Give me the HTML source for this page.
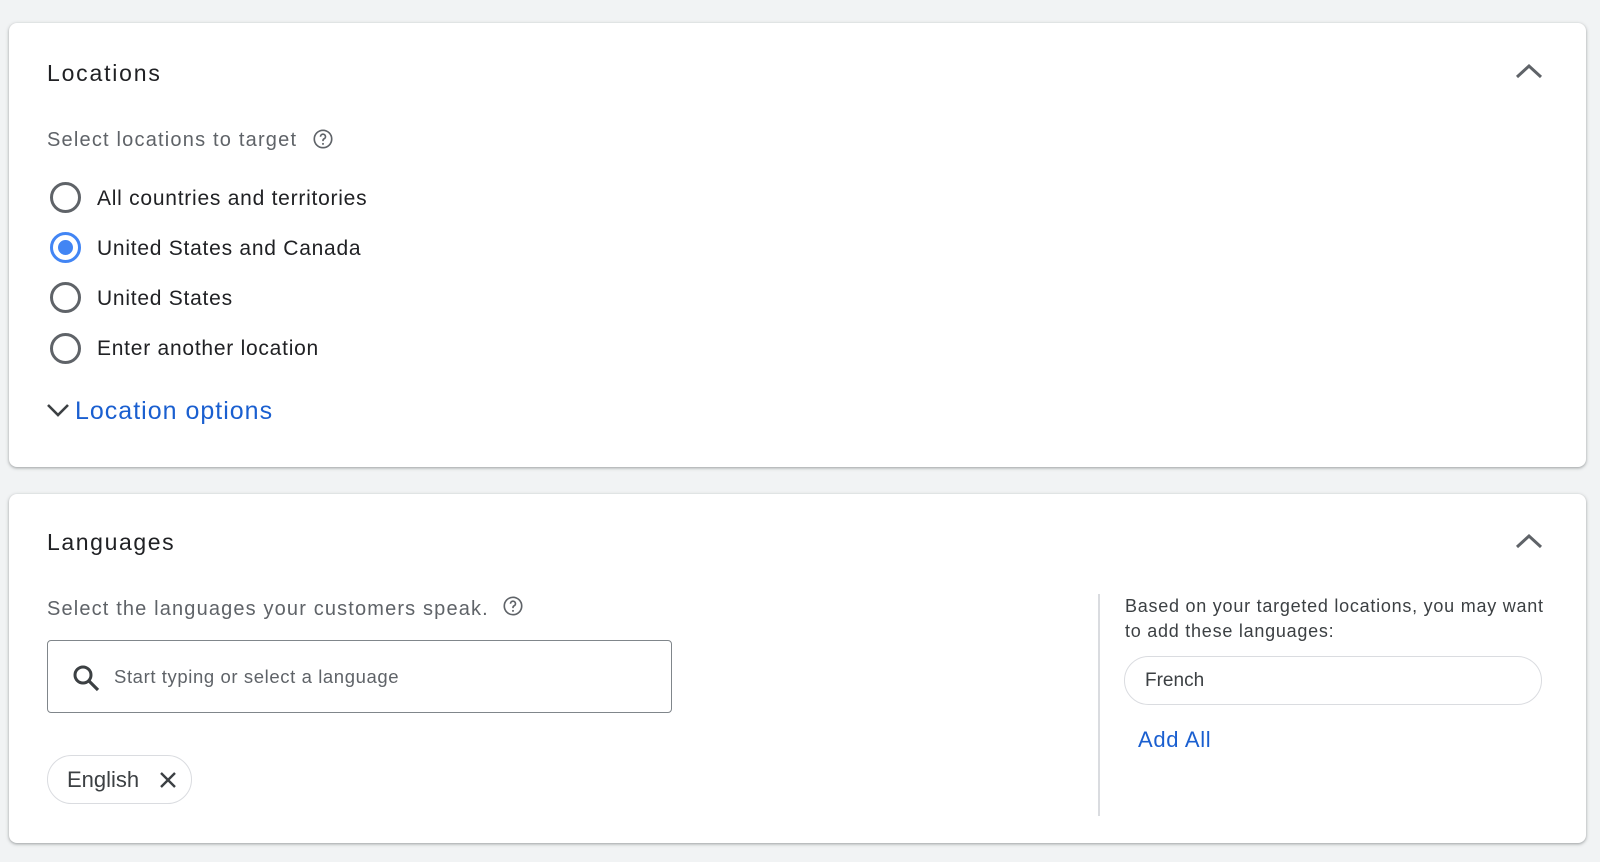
<!DOCTYPE html>
<html><head><meta charset="utf-8"><style>
*{margin:0;padding:0;box-sizing:border-box}
body{width:1600px;height:862px;background:#f1f3f4;font-family:"Liberation Sans",Arial,sans-serif;position:relative;overflow:hidden;color:#202124}
.card{position:absolute;left:9px;width:1577px;background:#fff;border-radius:8px;box-shadow:0 1px 2px rgba(60,64,67,.3),0 1px 3px 1px rgba(60,64,67,.15)}
.a{position:absolute;white-space:nowrap}
.t{font-size:23px;color:#202124}
.sub{font-size:20px;color:#5f6368;letter-spacing:1.2px}
.radio{position:absolute;width:31px;height:31px;border:3px solid #5f6368;border-radius:50%;left:50px}
.rl{font-size:21px;color:#202124;left:97px;letter-spacing:.75px}
</style></head><body>
<div class="card" style="top:23px;height:444px"></div>
<div class="card" style="top:494px;height:349px"></div>

<div class="a t" style="left:47px;top:60px;letter-spacing:1.8px">Locations</div>
<svg class="a" style="left:1515px;top:62px" width="28" height="18" viewBox="0 0 28 18"><path d="M2 15 L14 4 L26 15" fill="none" stroke="#5f6368" stroke-width="3"/></svg>
<div class="a sub" style="left:47px;top:129px">Select locations to target</div>
<svg class="a" style="left:312px;top:128px" width="22" height="22" viewBox="0 0 24 24"><circle cx="12" cy="12" r="9.5" fill="none" stroke="#5f6368" stroke-width="1.8"/><path d="M9.3 9.5a2.7 2.7 0 1 1 3.8 2.4c-.8.4-1.1 1-1.1 1.8v.6" fill="none" stroke="#5f6368" stroke-width="1.8"/><circle cx="12" cy="17.3" r="1.1" fill="#5f6368"/></svg>

<div class="radio" style="top:182px"></div>
<div class="a rl" style="top:187px">All countries and territories</div>
<div class="radio" style="top:232px;border-color:#4285f4"><div style="position:absolute;left:5px;top:5px;width:15px;height:15px;border-radius:50%;background:#4285f4"></div></div>
<div class="a rl" style="top:237px">United States and Canada</div>
<div class="radio" style="top:282px"></div>
<div class="a rl" style="top:287px">United States</div>
<div class="radio" style="top:333px"></div>
<div class="a rl" style="top:337px">Enter another location</div>

<svg class="a" style="left:46px;top:402px" width="24" height="16" viewBox="0 0 24 16"><path d="M2 3 L12 13 L22 3" fill="none" stroke="#3c4043" stroke-width="2.6"/></svg>
<div class="a" style="left:75px;top:397px;font-size:25px;color:#1a5fd0;letter-spacing:1px">Location options</div>

<div class="a t" style="left:47px;top:529px;letter-spacing:1.6px">Languages</div>
<svg class="a" style="left:1515px;top:532px" width="28" height="18" viewBox="0 0 28 18"><path d="M2 15 L14 4 L26 15" fill="none" stroke="#5f6368" stroke-width="3"/></svg>
<div class="a sub" style="left:47px;top:598px;letter-spacing:1.15px">Select the languages your customers speak.</div>
<svg class="a" style="left:502px;top:595px" width="22" height="22" viewBox="0 0 24 24"><circle cx="12" cy="12" r="9.5" fill="none" stroke="#5f6368" stroke-width="1.8"/><path d="M9.3 9.5a2.7 2.7 0 1 1 3.8 2.4c-.8.4-1.1 1-1.1 1.8v.6" fill="none" stroke="#5f6368" stroke-width="1.8"/><circle cx="12" cy="17.3" r="1.1" fill="#5f6368"/></svg>

<div class="a" style="left:47px;top:640px;width:625px;height:73px;border:1.5px solid #80868b;border-radius:4px"></div>
<svg class="a" style="left:71px;top:663px" width="30" height="30" viewBox="0 0 30 30"><circle cx="12" cy="12" r="8" fill="none" stroke="#3c4043" stroke-width="3"/><path d="M18 18 L27 27" stroke="#3c4043" stroke-width="3.2"/></svg>
<div class="a" style="left:114px;top:666px;font-size:18.5px;color:#5f6368;letter-spacing:.6px">Start typing or select a language</div>

<div class="a" style="left:47px;top:755px;width:145px;height:49px;border:1.5px solid #dadce0;border-radius:25px"></div>
<div class="a" style="left:67px;top:767px;font-size:22px;color:#3c4043">English</div>
<svg class="a" style="left:158px;top:770px" width="20" height="20" viewBox="0 0 20 20"><path d="M3 3 L17 17 M17 3 L3 17" stroke="#3c4043" stroke-width="2.4"/></svg>

<div class="a" style="left:1098px;top:594px;width:1.5px;height:222px;background:#dadce0"></div>
<div class="a" style="left:1125px;top:594px;font-size:18px;color:#3c4043;line-height:25px;letter-spacing:.75px">Based on your targeted locations, you may want<br>to add these languages:</div>
<div class="a" style="left:1124px;top:656px;width:418px;height:49px;border:1.5px solid #dadce0;border-radius:25px"></div>
<div class="a" style="left:1145px;top:670px;font-size:19px;color:#3c4043">French</div>
<div class="a" style="left:1138px;top:727px;font-size:22px;color:#1a5fd0;letter-spacing:.7px">Add All</div>
</body></html>
